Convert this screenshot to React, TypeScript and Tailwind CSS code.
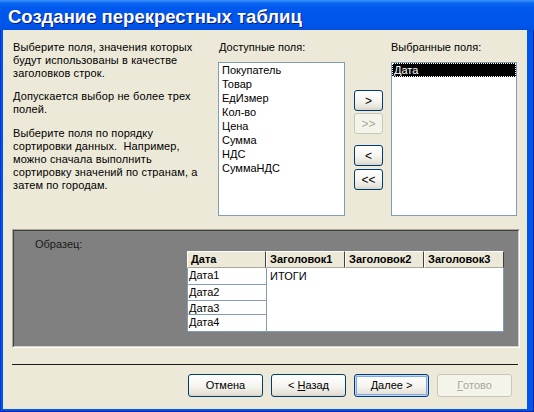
import React from "react";

// ─── Types ────────────────────────────────────────────────────────────────────

type BtnProps = {
  children: React.ReactNode;
  className?: string;
  disabled?: boolean;
  isDefault?: boolean;
};

// ─── XP style push button ─────────────────────────────────────────────────────

function XpButton({ children, className = "", disabled = false, isDefault = false }: BtnProps) {
  const look = disabled
    ? "border-[#c9c7ba] bg-[#f5f4ea] text-[#aca899]"
    : "border-[#003c74] bg-[linear-gradient(to_bottom,#ffffff,#f5f4ef_55%,#e6e2d8_88%,#d8d2c6)] text-black";
  const ring = isDefault ? "shadow-[inset_0_0_0_1px_#c2d8f8,inset_0_0_0_2px_#7ea6e6]" : "";
  return (
    <div
      className={`flex items-center justify-center rounded-[3px] border leading-none ${look} ${ring} ${className}`}
    >
      {children}
    </div>
  );
}

// ─── List box ─────────────────────────────────────────────────────────────────

const AVAILABLE = ["Покупатель", "Товар", "ЕдИзмер", "Кол-во", "Цена", "Сумма", "НДС", "СуммаНДС"];

function ListBox({ items, selected }: { items: string[]; selected?: number }) {
  return (
    <div className="mt-[8px] h-[154px] border border-[#7f9db9] bg-white">
      {items.map((it, i) =>
        i === selected ? (
          <div
            key={it}
            className="h-[14px] leading-[14px] pl-[2px] bg-black text-white outline-1 outline-dotted outline-white -outline-offset-1"
          >
            {it}
          </div>
        ) : (
          <div key={it} className="h-[14px] leading-[14px] pl-[3px]">
            {it}
          </div>
        )
      )}
    </div>
  );
}

// ─── Sample grid ──────────────────────────────────────────────────────────────

const HEADERS = [
  { label: "Дата", w: "w-[79px]" },
  { label: "Заголовок1", w: "w-[79px]" },
  { label: "Заголовок2", w: "w-[79px]" },
  { label: "Заголовок3", w: "w-[80px]" },
];

const ROWS = [
  { label: "Дата1", h: "h-[17px]" },
  { label: "Дата2", h: "h-[16px]" },
  { label: "Дата3", h: "h-[14px]" },
  { label: "Дата4", h: "h-[17px]" },
];

function SampleGrid() {
  return (
    <div className="ml-[173px] w-[317px]">
      <div className="flex h-[17px]">
        {HEADERS.map((h) => (
          <div
            key={h.label}
            className={`${h.w} h-full border-t border-l border-t-white border-l-white border-r border-r-[#404040] border-b border-b-[#aca899] bg-[#ece9d8] pl-[3px] font-bold leading-[15px]`}
          >
            {h.label}
          </div>
        ))}
      </div>
      <div className="flex">
        <div className="w-[79px] flex flex-col border-l border-[#7f9db9] bg-white">
          {ROWS.map((r) => (
            <div key={r.label} className={`${r.h} border-b border-[#7f9db9] pl-[1px] leading-[15px]`}>
              {r.label}
            </div>
          ))}
        </div>
        <div className="flex-1 border border-t-0 border-[#7f9db9] bg-white pl-[3px] leading-[16px]">ИТОГИ</div>
      </div>
    </div>
  );
}

// ─── Main Component ───────────────────────────────────────────────────────────

export default function App() {
  return (
    <div className="w-[534px] h-[412px] flex flex-col overflow-hidden bg-[#0055ea] shadow-[inset_1px_0_0_#0831d9,inset_-1px_0_0_#001ea0,inset_0_-1px_0_#001ea0] font-['Liberation_Sans',sans-serif] text-[11px] text-black">
      {/* ── Title bar ── */}
      <div className="h-[30px] shrink-0 flex items-center px-[8px] pt-[4px] bg-[linear-gradient(to_bottom,#3d95ff_0px,#0a66f0_3px,#0058ee_8px,#0055ea_24px,#0050e0_30px)]">
        <span className="font-['Liberation_Sans',sans-serif] text-[18.5px] font-bold text-white [text-shadow:1px_1px_0_#0a1a80]">
          Создание перекрестных таблиц
        </span>
      </div>

      {/* ── Client area ── */}
      <div className="flex-1 flex flex-col ml-[3px] mr-[7px] mb-[3px] bg-[#ece9d8]">
        {/* ── Field pickers ── */}
        <div className="flex pt-[11px] pl-[10px]">
          <div className="w-[205px] leading-[13px] tracking-[0.12px] whitespace-nowrap">
            <p>
              Выберите поля, значения которых
              <br />
              будут использованы в качестве
              <br />
              заголовков строк.
            </p>
            <p className="mt-[10px]">
              Допускается выбор не более трех
              <br />
              полей.
            </p>
            <p className="mt-[11px]">
              Выберите поля по порядку
              <br />
              сортировки данных.&nbsp; Например,
              <br />
              можно сначала выполнить
              <br />
              сортировку значений по странам, а
              <br />
              затем по городам.
            </p>
          </div>

          <div className="w-[127px] flex flex-col">
            <div className="h-[13px] leading-[13px] pl-[1px]">Доступные поля:</div>
            <ListBox items={AVAILABLE} />
          </div>

          <div className="ml-[9px] w-[29px] flex flex-col pt-[49px] text-[12px]">
            <XpButton className="h-[21px]">&gt;</XpButton>
            <XpButton className="h-[21px] mt-[2px]" disabled>
              &gt;&gt;
            </XpButton>
            <XpButton className="h-[21px] mt-[11px]">&lt;</XpButton>
            <XpButton className="h-[21px] mt-[3px]">&lt;&lt;</XpButton>
          </div>

          <div className="ml-[8px] w-[126px] flex flex-col">
            <div className="h-[13px] leading-[13px]">Выбранные поля:</div>
            <ListBox items={["Дата"]} selected={0} />
          </div>
        </div>

        {/* ── Sample frame ── */}
        <div className="mt-[13px] ml-[9px] mr-[7px] h-[119px] border border-t-[#aca899] border-l-[#aca899] border-r-white border-b-white">
          <div className="h-full border border-t-[#404040] border-l-[#404040] border-r-[#d4d0c8] border-b-[#d4d0c8] bg-[#808080]">
            <div className="pt-[7px] pl-[21px] h-[20px] leading-[13px] text-[#1a1a1a]">Образец:</div>
            <SampleGrid />
          </div>
        </div>

        {/* ── Separator ── */}
        <div className="mt-[16px] mx-[9px] h-px bg-[#1a1a1a]" />

        {/* ── Wizard buttons ── */}
        <div className="mt-[9px] pr-[15px] flex justify-end gap-[8px]">
          <XpButton className="w-[75px] h-[23px]">Отмена</XpButton>
          <XpButton className="w-[75px] h-[23px]">
            &lt;&nbsp;<span className="underline">Н</span>азад
          </XpButton>
          <XpButton className="w-[75px] h-[23px]" isDefault>
            <span className="underline">Д</span>алее&nbsp;&gt;
          </XpButton>
          <XpButton className="w-[75px] h-[23px]" disabled>
            <span className="underline">Г</span>отово
          </XpButton>
        </div>
      </div>
    </div>
  );
}
